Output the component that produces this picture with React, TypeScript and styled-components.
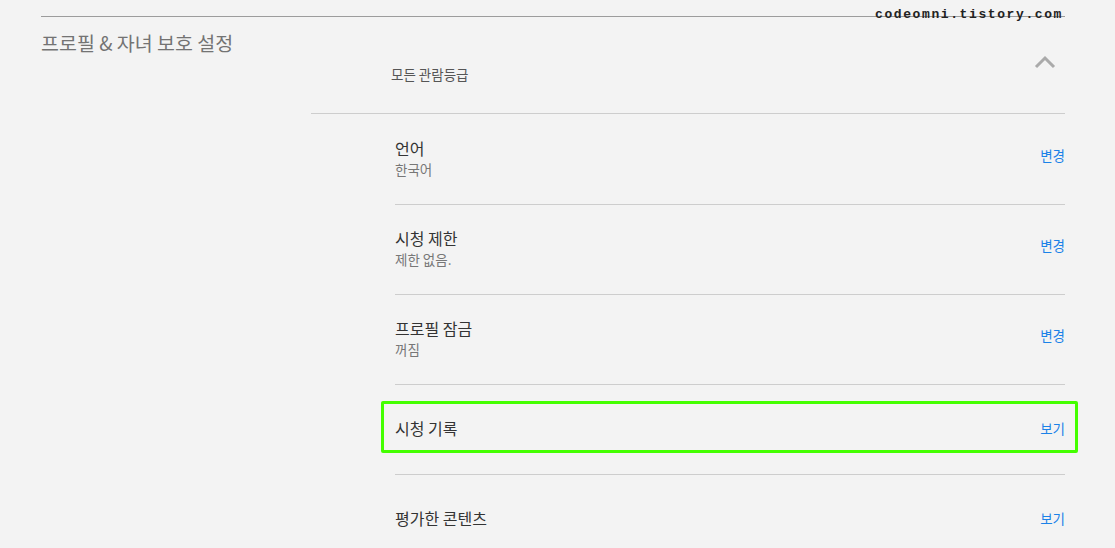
import React from 'react'
import styled, { createGlobalStyle } from 'styled-components'

const GlobalStyle = createGlobalStyle`
  html, body { margin: 0; padding: 0; background: #f3f3f3; }
  body {
    font-family: "Noto Sans CJK KR", "Noto Sans", sans-serif;
    overflow: hidden;
  }
`

const Page = styled.div`
  position: relative;
  width: 1024px;
  padding: 16px 50px 0 41px;
  height: 548px;
  box-sizing: content-box;
`

const Watermark = styled.div`
  position: absolute;
  top: 7px;
  left: 875px;
  font-family: "Liberation Mono", "DejaVu Sans Mono", monospace;
  font-weight: bold;
  font-size: 13px;
  letter-spacing: 1.6px;
  line-height: 16px;
  color: #222;
`

const Divider = styled.div`
  border-top: 1px solid #9c9c9c;
`

const Layout = styled.div`
  display: grid;
  grid-template-columns: 270px 1fr;
`

const SideTitle = styled.h2`
  margin: 13px 0 0;
  font-size: 19.5px;
  font-weight: 400;
  line-height: 26px;
  color: #737373;
`

const Section = styled.section`
  display: flex;
  flex-direction: column;
`

const SectionHeader = styled.div`
  display: flex;
  justify-content: space-between;
  align-items: flex-start;
  height: 96px;
  border-bottom: 1px solid #cdcdcd;
`

const Rating = styled.span`
  margin: 48px 0 0 80px;
  font-size: 13.5px;
  line-height: 18px;
  color: #555;
`

const Chevron = styled.svg`
  margin: 38px 9px 0 0;
  width: 22px;
  height: 14px;
`

const RowList = styled.div`
  padding-top: 1px;
`

const Row = styled.div<{ $last?: boolean }>`
  position: relative;
  display: flex;
  justify-content: space-between;
  align-items: center;
  margin-left: 84px;
  height: 90px;
  padding-bottom: 4px;
  box-sizing: border-box;
  border-bottom: 1px solid ${p => (p.$last ? 'transparent' : '#cdcdcd')};
`

const Texts = styled.div`
  display: flex;
  flex-direction: column;
`

const RowTitle = styled.span`
  font-size: 16px;
  line-height: 22px;
  color: #333;
`

const RowSub = styled.span`
  margin-top: 1px;
  font-size: 13.5px;
  line-height: 19px;
  color: #777;
`

const Action = styled.a<{ $offset?: boolean }>`
  font-size: 13.5px;
  line-height: 18px;
  color: #1b82e8;
  text-decoration: none;
  margin-top: ${p => (p.$offset ? '-5px' : '0')};
`

// green annotation box drawn over the row
const Highlight = styled.div`
  position: absolute;
  top: 16px;
  left: -14px;
  right: -13px;
  height: 52px;
  box-sizing: border-box;
  border: 3px solid #44ff00;
  border-radius: 2px;
  pointer-events: none;
`

const rows = [
  { title: '언어', sub: '한국어', action: '변경' },
  { title: '시청 제한', sub: '제한 없음.', action: '변경' },
  { title: '프로필 잠금', sub: '꺼짐', action: '변경' },
  { title: '시청 기록', action: '보기', highlight: true },
  { title: '평가한 콘텐츠', action: '보기', last: true },
]

export default function App() {
  return (
    <>
      <GlobalStyle />
      <Page>
        <Watermark>codeomni.tistory.com</Watermark>
        <Divider />
        <Layout>
          <SideTitle>프로필 &amp; 자녀 보호 설정</SideTitle>
          <Section>
            <SectionHeader>
              <Rating>모든 관람등급</Rating>
              <Chevron viewBox="0 0 22 14">
                <path d="M2 12 L11 3 L20 12" fill="none" stroke="#aaaaaa" strokeWidth="3" />
              </Chevron>
            </SectionHeader>
            <RowList>
              {rows.map(r => (
                <Row key={r.title} $last={r.last}>
                  <Texts>
                    <RowTitle>{r.title}</RowTitle>
                    {r.sub && <RowSub>{r.sub}</RowSub>}
                  </Texts>
                  <Action href="#" $offset={!!r.sub}>{r.action}</Action>
                  {r.highlight && <Highlight />}
                </Row>
              ))}
            </RowList>
          </Section>
        </Layout>
      </Page>
    </>
  )
}
